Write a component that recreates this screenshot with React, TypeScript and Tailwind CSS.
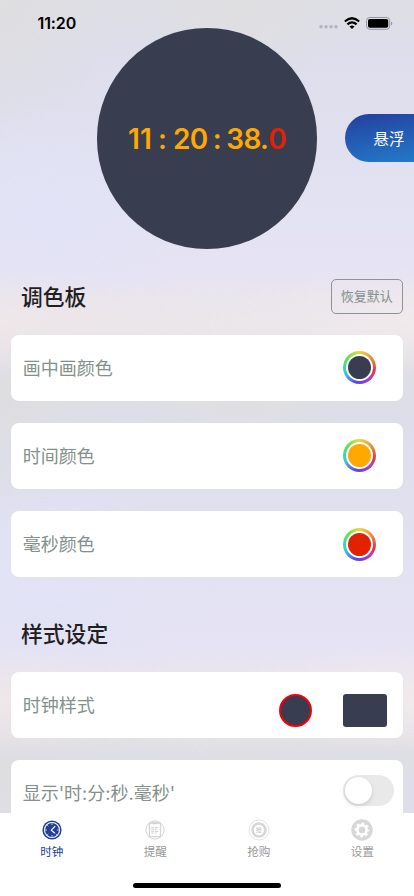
import type { ReactNode } from 'react';

const ringStyle =
  'flex h-[33px] w-[33px] items-center justify-center rounded-full bg-[conic-gradient(from_0deg,#e8d83c,#eda63f_10%,#e96a3d_20%,#dc3450_29%,#bd35c4_37%,#7d3be0_46%,#5846ee_54%,#4e8bea_62%,#3cc8d8_69%,#3ee18c_79%,#65e34c_87%,#aae23d_94%,#e8d83c)]';

function ColorWell({ fill }: { fill: string }) {
  return (
    <div className={ringStyle}>
      <div className="flex h-[27px] w-[27px] items-center justify-center rounded-full bg-white">
        <div className={`h-[23px] w-[23px] rounded-full ${fill}`} />
      </div>
    </div>
  );
}

function Row({ label, children, className = '' }: { label: string; children: ReactNode; className?: string }) {
  return (
    <div className={`flex h-[66px] shrink-0 items-center justify-between rounded-[8px] bg-white pl-[11.5px] ${className}`}>
      <span className="pt-[2px] font-['Inter','Noto_Sans_CJK_SC',sans-serif] text-[18px] leading-[26px] font-normal text-[#84908b] [font-feature-settings:'calt'_0]">
        {label}
      </span>
      {children}
    </div>
  );
}

function StatusBar() {
  return (
    <div className="flex h-7 shrink-0 items-start justify-between pr-[21px] pl-[37.5px]">
      <span className="pt-[13px] font-['Inter'] text-[16px] leading-[20px] font-semibold tracking-[-0.1px] text-black">11:20</span>
      <div className="flex items-center pt-[16px]">
        <svg width="20" height="14" viewBox="0 0 20 14" fill="#b4b4be" className="mr-[5px]">
          <circle cx="2" cy="10.8" r="1.8" />
          <circle cx="7" cy="10.8" r="1.8" />
          <circle cx="12" cy="10.8" r="1.8" />
          <circle cx="17" cy="10.8" r="1.8" />
        </svg>
        <svg width="16" height="12" viewBox="0 0 16 12" className="mr-[6px]" fill="none" stroke="#000" strokeWidth="2.2">
          <path d="M.8 4.5Q8-2 15.2 4.5" />
          <path d="M3.4 7.3Q8 3.3 12.6 7.3" />
          <path d="M8 12 5.5 9.6Q8 7.4 10.5 9.6Z" fill="#000" stroke="none" />
        </svg>
        <svg width="27" height="13" viewBox="0 0 27 13">
          <rect x=".5" y=".5" width="23.2" height="11.8" rx="3.2" fill="none" stroke="#96969f" />
          <rect x="2" y="2" width="20.2" height="8.8" rx="1.8" />
          <path d="M25 4.4v4a2.2 2.2 0 0 0 0-4Z" fill="#96969f" />
        </svg>
      </div>
    </div>
  );
}

function ClockIcon() {
  return (
    <svg width="22" height="22" viewBox="0 0 22 22" fill="none">
      <circle cx="11" cy="11" r="9.6" fill="#213e9a" />
      <circle cx="11" cy="11" r="7.5" stroke="#fff" strokeWidth="1.1" />
      <path d="M11 4.4v1.6M11 16v1.6M4.4 11H6M16 11h1.6M6.3 6.3l1 1M14.7 14.7l1 1M6.3 15.7l1-1" stroke="#dce1f2" strokeWidth=".9" />
      <path d="m14.2 7.2-3.9 4 3.5 3" stroke="#fff" strokeWidth="1.2" />
    </svg>
  );
}

function RemindIcon() {
  return (
    <svg width="22" height="22" viewBox="0 0 22 22" fill="none" stroke="#d4d4d4">
      <circle cx="11" cy="11" r="9.1" strokeWidth="1" />
      <rect x="5.5" y="4" width="11" height="13.7" rx="1.2" strokeWidth="1.3" fill="#fff" />
      <path d="M8.3 4.2h5.4" strokeWidth="2" />
      <path d="M7.3 8.5h2.6m1 0h3M7.3 10.1h2.6m1 0h2M7.3 12.4h2.6m1 0h3M7.3 14h2.6m1 0h2" strokeWidth="1.1" />
    </svg>
  );
}

function BuyIcon() {
  return (
    <div className="grid h-[22px] w-[22px] place-items-center">
      <svg width="22" height="22" viewBox="0 0 22 22" fill="none" stroke="#d7d7d7" className="col-start-1 row-start-1">
        <circle cx="11" cy="11" r="10" strokeWidth=".7" />
        <circle cx="11" cy="11" r="6.5" strokeWidth="2.7" />
      </svg>
      <span className="col-start-1 row-start-1 text-[6px] leading-[8px] text-[#bdbdbd]">抢</span>
    </div>
  );
}

function GearIcon() {
  return (
    <svg width="22" height="22" viewBox="0 0 22 22">
      <circle cx="11" cy="11" r="10.7" fill="#d7d7d7" />
      <circle cx="11" cy="11" r="5.9" fill="#fff" />
      <circle cx="11" cy="11" r="6" fill="none" stroke="#fff" strokeWidth="2.8" strokeDasharray="2.65 2.062" strokeDashoffset="1.32" />
      <circle cx="11" cy="11" r="3.3" fill="#d7d7d7" />
    </svg>
  );
}

function Tab({ label, icon, color }: { label: string; icon: ReactNode; color: string }) {
  return (
    <div className="flex flex-1 flex-col items-center pt-[6.5px]">
      {icon}
      <span className={`mt-[2px] text-[11.6px] leading-[18px] ${color}`}>{label}</span>
    </div>
  );
}

export default function App() {
  return (
    <div className="flex h-[896px] w-[414px] flex-col overflow-hidden bg-[radial-gradient(ellipse_210px_52px_at_0px_322px,#efe7e9,transparent),radial-gradient(ellipse_210px_54px_at_414px_322px,#f1eaec,transparent),radial-gradient(ellipse_170px_50px_at_210px_325px,#ebe7ea,transparent),radial-gradient(ellipse_160px_110px_at_50px_215px,#e1e3f6,transparent),radial-gradient(ellipse_110px_130px_at_0px_10px,#dedee0,transparent),radial-gradient(ellipse_100px_80px_at_240px_10px,#dfdfe1,transparent),linear-gradient(#dedee5_0px,#dedeec_60px,#dfdfee_110px,#e2e2f2_200px,#e6e3f4_265px,#e8e4f0_300px,#e5e1e8_340px,#dedee5_378px)] bg-[length:414px_378px] font-['Liberation_Sans','Noto_Sans_CJK_SC',sans-serif]">
      <StatusBar />
      <main className="flex min-h-0 flex-1 flex-col overflow-hidden px-[11.2px]">
        <div className="-mr-[11.2px] flex shrink-0 items-center">
          <div className="ml-[85.6px] flex h-[220.5px] w-[220.5px] items-center justify-center rounded-full bg-[#383d50] pt-[2px] font-['Inter'] text-[28px] font-semibold tracking-[-0.7px] whitespace-pre text-[#ffa800] [font-feature-settings:'calt'_0] [word-spacing:-1.1px]">
            <span className="tracking-[0.1px]">11 : </span>
            <span>20 : 38.</span>
            <span className="text-[#e12200]">0</span>
          </div>
          <div className="ml-auto flex h-[48px] w-[68.8px] items-center rounded-l-full bg-linear-170 from-[#243f9d] to-[#217aca] pt-[3px] pl-[28px] text-[15.7px] text-white">
            悬浮
          </div>
        </div>
        <div className="mt-[30px] flex h-[35.5px] shrink-0 items-center justify-between pl-[9.8px]">
          <h2 className="pt-[4px] text-[21.8px] font-medium text-[#241f1f]">调色板</h2>
          <button className="h-[35.5px] w-[72px] rounded-[5px] border border-[#8d9496] text-[13px] font-normal text-[#84908b]">恢复默认</button>
        </div>
        <div className="mt-[20.7px] flex shrink-0 flex-col gap-[22.2px]">
          <Row label="画中画颜色" className="pr-[27px]"><ColorWell fill="bg-[#383d50]" /></Row>
          <Row label="时间颜色" className="pr-[27px]"><ColorWell fill="bg-[#ffa800]" /></Row>
          <Row label="毫秒颜色" className="pr-[27px]"><ColorWell fill="bg-[#e12200]" /></Row>
        </div>
        <h2 className="mt-[40px] h-[35px] shrink-0 pl-[9.8px] text-[21.8px] leading-[35px] font-medium text-[#241f1f]">样式设定</h2>
        <div className="mt-[19.5px] flex shrink-0 flex-col gap-[22.2px]">
          <Row label="时钟样式" className="pr-[16px]">
            <div className="mt-[11px] flex gap-[31px]">
              <div className="h-[33px] w-[33px] rounded-full border-2 border-[#f40009] bg-[#383d50]" />
              <div className="h-[33px] w-[44px] rounded-[3px] bg-[#383d50]" />
            </div>
          </Row>
          <Row label="显示'时:分:秒.毫秒'" className="pr-[9px]">
            <div className="-mt-[5px] flex h-[31px] w-[51px] items-center rounded-full bg-[#e9e9ea] p-[2px]">
              <div className="h-[27px] w-[27px] rounded-full bg-white shadow-[0_2px_4px_#0002]" />
            </div>
          </Row>
        </div>
      </main>
      <nav className="flex h-[83.5px] shrink-0 flex-col bg-white">
        <div className="flex">
          <Tab label="时钟" icon={<ClockIcon />} color="text-[#213e9a]" />
          <Tab label="提醒" icon={<RemindIcon />} color="text-[#9a9a9a]" />
          <Tab label="抢购" icon={<BuyIcon />} color="text-[#9a9a9a]" />
          <Tab label="设置" icon={<GearIcon />} color="text-[#9a9a9a]" />
        </div>
        <div className="mx-auto mt-auto mb-[8.5px] h-[5px] w-[148px] rounded-full bg-black" />
      </nav>
    </div>
  );
}
